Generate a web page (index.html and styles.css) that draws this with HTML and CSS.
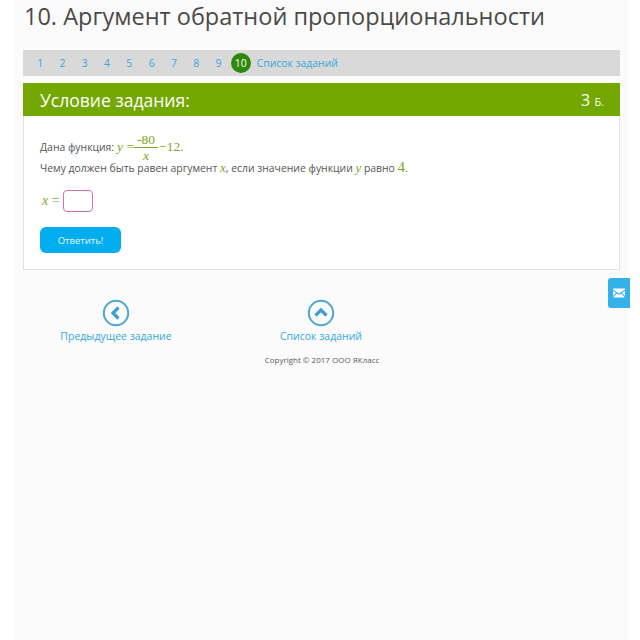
FILE: index.html
```html
<!DOCTYPE html>
<html lang="ru">
<head>
  <meta charset="UTF-8" />
  <title>Аргумент обратной пропорциональности</title>
  <link rel="stylesheet" href="styles.css">
</head>
<body>
  <div class="page">
    <h1>10. Аргумент обратной пропорциональности</h1>
    <nav class="tasks">
      <a href="#">1</a>
      <a href="#">2</a>
      <a href="#">3</a>
      <a href="#">4</a>
      <a href="#">5</a>
      <a href="#">6</a>
      <a href="#">7</a>
      <a href="#">8</a>
      <a href="#">9</a>
      <a href="#" class="current">10</a>
      <a href="#" class="list-link">Список заданий</a>
    </nav>
    <section class="card">
      <div class="card-head">
        <span>Условие задания:</span>
        <span class="score">3 <small>Б.</small></span>
      </div>
      <div class="card-body">
        <div class="line first-line">
          <span class="lead">Дана функция:</span>
          <span class="math"><i>y</i> =</span>
          <span class="frac math"><span class="num">-80</span><i class="den">x</i></span>
          <span class="math">−12.</span>
        </div>
        <div class="line">
          Чему должен быть равен аргумент <i class="math">x</i>, если значение функции <i class="math">y</i> равно <span class="math big">4</span><span class="math">.</span>
        </div>
        <div class="answer">
          <span class="math"><i>x</i> =</span>
          <input type="text" class="answer-box">
        </div>
        <button type="button">Ответить!</button>
      </div>
    </section>
    <div class="bottom-nav">
      <a href="#" class="bottom-link">
        <svg width="28" height="28" viewBox="0 0 28 28"><circle cx="14" cy="14" r="12.2" fill="none" stroke="#4ba6d2" stroke-width="2"/><path d="M16.500 8.500 11 14l5.500 5.500" fill="none" stroke="#3d9fd3" stroke-width="3.200"/></svg>
        Предыдущее задание
      </a>
      <a href="#" class="bottom-link">
        <svg width="28" height="28" viewBox="0 0 28 28"><circle cx="14" cy="14" r="12.200" fill="none" stroke="#4ba6d2" stroke-width="2"/><path d="M8.500 16.500 14 11l5.500 5.500" fill="none" stroke="#3d9fd3" stroke-width="3.200"/></svg>
        Список заданий
      </a>
    </div>
    <p class="copyright">Copyright © 2017 ООО ЯКласс</p>
  </div>
  <a href="#" class="mail-tab">
    <svg width="12" height="12" viewBox="0 0 12 12"><path d="M0 1.500h12v1L6 6.500 0 2.500z" fill="#fff"/><path d="M0 3.800 3 5.800 0 9zM12 3.800 9 5.800 12 9zM3.800 6.400 6 7.800l2.200-1.400L12 10.500H0z" fill="#fff"/></svg>
  </a>
</body>
</html>
```

FILE: styles.css
```css
html, body {
  margin: 0;
  height: 100%;
  background: #fff;
}
body {
  font-family: 'Open Sans', 'Noto Sans', sans-serif;
  color: #555;
  overflow: hidden;
}
a {
  color: #35a8dc;
  text-decoration: none;
}
.page {
  box-sizing: border-box;
  width: 615px;
  height: 640px;
  margin-left: 13px;
  padding: 0 8px 0 10px;
  background: #fbfbfb;
}
h1 {
  margin: 0 0 17px 1px;
  font-size: 23.500px;
  line-height: 33px;
  font-weight: 400;
  color: #4a4a48;
  white-space: nowrap;
}
.tasks {
  display: flex;
  align-items: center;
  height: 26px;
  padding-left: 6px;
  background: #d9d9d9;
  font-size: 10.400px;
}
.tasks a {
  width: 22.300px;
  text-align: center;
}
.tasks a.current {
  width: 20px;
  height: 20px;
  margin-left: 1px;
  border-radius: 50%;
  background: #2c8a08;
  color: #fff;
  line-height: 20px;
}
.tasks a.list-link {
  width: auto;
  margin-left: 6px;
}
.card {
  margin-top: 7px;
  border: 1px solid #e3e3e3;
  border-top: 0;
  background: #fff;
}
.card-head {
  display: flex;
  justify-content: space-between;
  align-items: center;
  height: 33px;
  margin: 0 -1px;
  padding: 0 16px 0 17px;
  background: #72a800;
  color: #fff;
  font-size: 17.500px;
}
.score {
  font-size: 16px;
}
.score small {
  font-size: 11px;
}
.card-body {
  padding: 19px 16px 16px;
  font-size: 10.400px;
}
.line {
  line-height: 16px;
}
.first-line {
  display: flex;
  align-items: center;
  height: 24px;
}
.lead {
  margin-right: 3px;
}
.math {
  font-family: 'Liberation Serif', serif;
  font-size: 13px;
  color: #7da81e;
}
.first-line .math {
  font-size: 13.500px;
}
.big {
  font-size: 15px;
}
.frac {
  display: inline-flex;
  flex-direction: column;
  align-items: center;
  width: 24px;
  margin: 0 1px 0 0;
  line-height: 15px;
}
.num {
  width: 100%;
  text-align: center;
  border-bottom: 1px solid #7da81e;
}
.den {
  line-height: 15px;
}
.answer {
  display: flex;
  align-items: center;
  gap: 3px;
  margin-top: 14px;
  padding-left: 2px;
}
.answer .math {
  font-size: 14px;
}
.answer-box {
  box-sizing: border-box;
  width: 30px;
  height: 22px;
  padding: 0;
  border: 1px solid #d46fb0;
  border-radius: 4px;
  background: #fff;
}
button {
  display: block;
  width: 81px;
  height: 26px;
  margin-top: 15px;
  padding: 0;
  border: none;
  border-radius: 6px;
  background: #00adef;
  color: #e8f8ff;
  font-family: inherit;
  font-size: 9.500px;
}
.bottom-nav {
  display: flex;
  margin-top: 29px;
}
.bottom-link {
  display: flex;
  flex-direction: column;
  align-items: center;
  gap: 2px;
  width: 186px;
  font-size: 10.500px;
  line-height: 15px;
}
.bottom-link + .bottom-link {
  width: 130px;
  margin-left: 47px;
}
.copyright {
  margin: 10px 0 0;
  padding-left: 1px;
  text-align: center;
  font-size: 8px;
  color: #5a5a5a;
}
.mail-tab {
  position: absolute;
  top: 278px;
  left: 608px;
  display: flex;
  align-items: center;
  justify-content: center;
  width: 22px;
  height: 30px;
  border-radius: 3px 0 0 3px;
  background: #35b1ea;
}
```
